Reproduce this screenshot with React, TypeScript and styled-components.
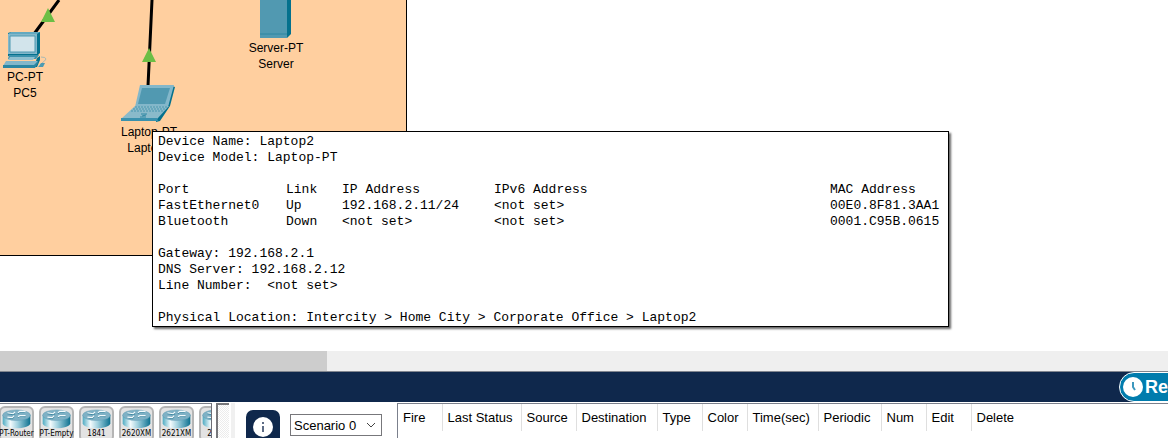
import React from "react";
import styled, { createGlobalStyle } from "styled-components";

const sans = `"Liberation Sans", Arial, sans-serif`;

const GlobalStyle = createGlobalStyle`
  * { box-sizing: border-box; }
  body { margin: 0; background: #fff; color: #000; font-family: ${sans}; overflow: hidden; }
`;

const Page = styled.div`
  display: flex;
  flex-direction: column;
  height: 100vh;
  overflow: hidden;
`;

const Workspace = styled.main`
  position: relative;
  flex: 1;
  overflow: hidden;
`;

const Cluster = styled.section`
  position: absolute;
  left: 0;
  top: 0;
  width: 407px;
  height: 256px;
  background: #ffcf9f;
  border: solid #000;
  border-width: 0 1px 1px 0;
`;

const Cables = styled.svg`
  position: absolute;
  left: 0;
  top: 0;
`;

const Node = styled.figure<{ $x: number; $y: number }>`
  position: absolute;
  left: ${(p) => p.$x}px;
  top: ${(p) => p.$y}px;
  width: 64px;
  margin: 0;
  display: flex;
  flex-direction: column;
  align-items: center;
  svg { display: block; }
`;

const NodeLabel = styled.figcaption`
  font-size: 12px;
  line-height: 16px;
  text-align: center;
  white-space: pre;
`;

const Tooltip = styled.div`
  position: absolute;
  left: 152px;
  top: 131px;
  width: 797px;
  padding: 2px 5px 0;
  background: #fff;
  border: 1px solid #000;
  box-shadow: 2px 2px 2px rgba(0, 0, 0, 0.6);
  font-family: "Liberation Mono", "Courier New", monospace;
  font-size: 13px;
  line-height: 16px;
  white-space: pre;
`;

const TipText = styled.p`
  margin: 0;
`;

const PortTable = styled.table`
  margin: 16px 0;
  width: 784px;
  table-layout: fixed;
  border-collapse: collapse;
  th, td { padding: 0; font-weight: 400; text-align: left; }
`;

const PortCol = styled.col<{ $w: number }>`
  width: ${(p) => p.$w}px;
`;

const ScrollTrack = styled.div`
  height: 20px;
  flex: none;
  background: #efefef;
`;

const ScrollThumb = styled.div`
  width: 28%;
  height: 100%;
  background: #cdcdcd;
`;

const ModeBar = styled.nav`
  flex: none;
  height: 32px;
  display: flex;
  justify-content: flex-end;
  overflow: hidden;
  background: #0f284c;
  border-top: 1px solid #81868f;
  border-bottom: 1px solid #fff;
`;

const RealtimeButton = styled.button`
  flex: none;
  display: flex;
  align-items: center;
  gap: 2px;
  width: 116px;
  margin-right: -67px;
  padding: 0 0 0 3px;
  border: 1px solid #fff;
  border-radius: 15px;
  background: #017cad;
  color: #fff;
  font: bold 18px/20px ${sans};
`;

const BottomPanel = styled.footer`
  flex: none;
  height: 35px;
  display: flex;
  overflow: hidden;
`;

const DeviceList = styled.div`
  flex: none;
  width: 213px;
  margin-left: -1px;
  padding-top: 2px;
  display: flex;
  gap: 5px;
  overflow: hidden;
  border-top: 1px solid #7b7f88;
  border-right: 1px solid #6d6d75;
`;

const DeviceButton = styled.button`
  flex: none;
  width: 35px;
  height: 36px;
  padding: 1px 0;
  display: flex;
  flex-direction: column;
  align-items: center;
  border: 2px solid #b5b5b5;
  border-radius: 6px;
  background: #e3e3e3;
  color: #000;
  font: 8px/10px "DejaVu Sans Condensed", "DejaVu Sans", Verdana, sans-serif;
  white-space: nowrap;
`;

const ListScroll = styled.div`
  flex: none;
  width: 13px;
  margin: 0 2px 0 4px;
  border-left: 2px solid #77777b;
  border-top: 2px solid #77777b;
  background: repeating-conic-gradient(#ececec 0 25%, #fff 0 50%) 0 0 / 2px 2px;
`;

const Splitter = styled.div`
  flex: none;
  width: 4px;
  background: #f0f0f0;
`;

const ScenarioPanel = styled.div`
  flex: none;
  display: flex;
  align-items: flex-start;
  gap: 10px;
  padding: 7px 15px 0 11px;
`;

const InfoButton = styled.button`
  width: 34px;
  height: 34px;
  padding: 5px 7px;
  border: 0;
  border-radius: 7px;
  background: #0f284c;
  svg { display: block; }
`;

const SelectWrap = styled.label`
  display: grid;
  margin-top: 4px;
  align-items: center;
  > * { grid-area: 1 / 1; }
  > svg { justify-self: end; margin-right: 6px; pointer-events: none; }
`;

const ScenarioSelect = styled.select`
  appearance: none;
  width: 92px;
  height: 22px;
  padding: 2px 0 0 3px;
  border: 1px solid #77777b;
  border-radius: 0;
  background: #fff;
  color: #000;
  font: 13px/16px ${sans};
`;

const EventPanel = styled.div`
  flex: 1;
  min-width: 0;
  border: solid #7b808c;
  border-width: 1px 0 0 1px;
`;

const EventTable = styled.table`
  border-collapse: collapse;
  table-layout: fixed;
  width: 643px;
  th {
    height: 27px;
    padding: 0 0 0 5px;
    border-right: 1px solid #dfdfdf;
    font-weight: 400;
    font-size: 13px;
    line-height: 16px;
    text-align: left;
    white-space: nowrap;
  }
  th:last-child { border-right: 0; }
`;

const PcIcon = () => (
  <svg width="48" height="37" viewBox="-2 0 48 37">
    <path d="M5 1L8 0H37V21L34 24H5Z" fill="#05718d" />
    <path d="M5 2L8 0H37L34 2Z" fill="#62a9c0" />
    <path d="M5 2H34V22H5Z" fill="#83b7ca" />
    <path d="M7 4H32V20H7Z" fill="#d2e4eb" stroke="#4e9ab2" />
    <path d="M6 23H36L33 27H5Z" fill="#3b92ad" />
    <path d="M7 25H32L30 28H5Z" fill="#8fbfcf" />
    <path d="M34 26L37 24V28L34 35H31Z" fill="#05718d" />
    <path d="M3 29H35L32 34H0Z" fill="#83b7ca" />
    <path d="M0 33H31L35 29V31L32 36H0Z" fill="#2b86a3" />
    <path d="M38 25Q43 25 43 27Q42 29 39 31" fill="none" stroke="#a9b9b4" />
    <path d="M36 34L38 31H42L40 35H35Z" fill="#4c9bb3" />
  </svg>
);

const LaptopIcon = () => (
  <svg width="56" height="39" viewBox="1 0 56 39">
    <path d="M52 1L55 2L50 21L40 36L36 37V33L48 20Z" fill="#05718d" />
    <path d="M20 0H54L48 22H15Z" fill="#83b7ca" />
    <path d="M22 3H50L45 19H18Z" fill="#5199b1" />
    <path d="M15 21H49L37 34H1Z" fill="#8abaca" />
    <path d="M1 33H37L38 36H1Z" fill="#3a91ad" />
    <path d="M15 22H47M13 24H45M11 26H43" stroke="#4996af" strokeDasharray="2 1" />
    <path d="M21 29H27M20 32H26M22 31L26 30" fill="none" stroke="#2f88a4" />
  </svg>
);

const ServerIcon = () => (
  <svg width="33" height="40" viewBox="0 0 33 40">
    <path d="M27 0H31V34L27 38Z" fill="#05718d" />
    <path d="M0 0H27V38H0Z" fill="#5199b1" />
    <path d="M0 34H27" stroke="#2e86a1" />
  </svg>
);

const RouterIcon = () => (
  <svg width="31" height="21" viewBox="0 0 31 21">
    <defs>
      <linearGradient id="drum">
        <stop offset="0" stopColor="#4fabc2" />
        <stop offset="0.280" stopColor="#f2fafc" />
        <stop offset="0.550" stopColor="#9fd0de" />
        <stop offset="1" stopColor="#0d7190" />
      </linearGradient>
    </defs>
    <path d="M1 6V15C2 22 29 22 30 15V6Z" fill="url(#drum)" />
    <ellipse cx="15.500" cy="6.500" rx="14.500" ry="5.500" fill="#7fb1c5" stroke="#5e9cb4" strokeWidth="0.500" />
    <g fill="none" strokeWidth="1.200">
      <path d="M6 5L12 6L14 5M25 8L19 7.500L17 9M17 5L19 3L24 3M13 8L11 10L7 9" stroke="#3f88a2" />
      <path d="M6 4L12 5L14 3M25 7L19 7L17 8M17 4L19 2.500L25 2.500M13 7L11 9L6 8.500" stroke="#f3fafc" />
    </g>
  </svg>
);

const ports = [
  ["FastEthernet0", "Up", "192.168.2.11/24", "<not set>", "00E0.8F81.3AA1"],
  ["Bluetooth", "Down", "<not set>", "<not set>", "0001.C95B.0615"],
];

const routers = ["PT-Router", "PT-Empty", "1841", "2620XM", "2621XM", "2811"];

const eventColumns: [string, number][] = [
  ["Fire", 44],
  ["Last Status", 79],
  ["Source", 55],
  ["Destination", 81],
  ["Type", 45],
  ["Color", 45],
  ["Time(sec)", 71],
  ["Periodic", 63],
  ["Num", 45],
  ["Edit", 45],
  ["Delete", 70],
];

export default function App() {
  return (
    <Page>
      <GlobalStyle />
      <Workspace>
        <Cluster>
          <Cables width="406" height="140" aria-hidden="true">
            <path d="M59 0L34 34M152 0L148 86" stroke="#000" strokeWidth="3" />
            <path d="M48 8L55 22H41ZM149 48L156 62H142Z" fill="#6cbe45" />
          </Cables>
          <Node $x={-7} $y={32}>
            <PcIcon />
            <NodeLabel>{"PC-PT\nPC5"}</NodeLabel>
          </Node>
          <Node $x={117} $y={85}>
            <LaptopIcon />
            <NodeLabel>{"Laptop-PT\nLaptop2"}</NodeLabel>
          </Node>
          <Node $x={244} $y={0}>
            <ServerIcon />
            <NodeLabel>{"Server-PT\nServer"}</NodeLabel>
          </Node>
        </Cluster>
        <Tooltip role="tooltip">
          <TipText>{"Device Name: Laptop2\nDevice Model: Laptop-PT"}</TipText>
          <PortTable>
            <colgroup>
              {[128, 56, 152, 336, 112].map((w, i) => (
                <PortCol key={i} $w={w} />
              ))}
            </colgroup>
            <thead>
              <tr>
                {["Port", "Link", "IP Address", "IPv6 Address", "MAC Address"].map((h) => (
                  <th key={h} scope="col">{h}</th>
                ))}
              </tr>
            </thead>
            <tbody>
              {ports.map((row) => (
                <tr key={row[0]}>
                  {row.map((cell, i) => (
                    <td key={i}>{cell}</td>
                  ))}
                </tr>
              ))}
            </tbody>
          </PortTable>
          <TipText>
            {"Gateway: 192.168.2.1\nDNS Server: 192.168.2.12\nLine Number:  <not set>\n\nPhysical Location: Intercity > Home City > Corporate Office > Laptop2"}
          </TipText>
        </Tooltip>
      </Workspace>
      <ScrollTrack>
        <ScrollThumb />
      </ScrollTrack>
      <ModeBar>
        <RealtimeButton type="button">
          <svg width="20" height="20" viewBox="0 0 20 20" aria-hidden="true">
            <circle cx="10" cy="10" r="10" fill="#fff" />
            <path d="M10 5V10L12 13" fill="none" stroke="#3c97bd" strokeWidth="2" />
          </svg>
          Realtime
        </RealtimeButton>
      </ModeBar>
      <BottomPanel>
        <DeviceList>
          {routers.map((name) => (
            <DeviceButton key={name} type="button">
              <RouterIcon />
              {name}
            </DeviceButton>
          ))}
        </DeviceList>
        <ListScroll />
        <Splitter />
        <ScenarioPanel>
          <InfoButton type="button" aria-label="Scenario information">
            <svg width="20" height="20" viewBox="0 0 20 20">
              <circle cx="10" cy="10" r="10" fill="#fff" />
              <path d="M10 5V7M10 9V15" stroke="#5d6c85" strokeWidth="2" />
            </svg>
          </InfoButton>
          <SelectWrap>
            <ScenarioSelect aria-label="Scenario">
              <option>Scenario 0</option>
            </ScenarioSelect>
            <svg width="10" height="6" viewBox="0 0 10 6" aria-hidden="true">
              <path d="M1 1L5 5L9 1" fill="none" stroke="#444" />
            </svg>
          </SelectWrap>
        </ScenarioPanel>
        <EventPanel>
          <EventTable>
            <colgroup>
              {eventColumns.map(([name, w]) => (
                <PortCol key={name} $w={w} />
              ))}
            </colgroup>
            <thead>
              <tr>
                {eventColumns.map(([name]) => (
                  <th key={name} scope="col">{name}</th>
                ))}
              </tr>
            </thead>
          </EventTable>
        </EventPanel>
      </BottomPanel>
    </Page>
  );
}
